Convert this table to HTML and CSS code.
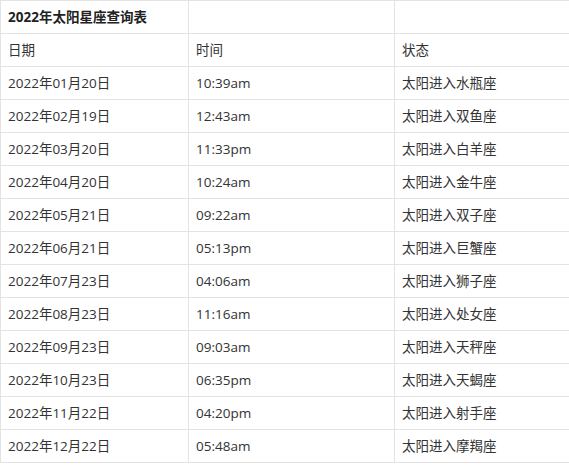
FILE: index.html
```html
<!DOCTYPE html>
<html lang="zh-CN">
<head>
<meta charset="utf-8">
<title>2022年太阳星座查询表</title>
<link rel="stylesheet" href="styles.css">
</head>
<body>
<table class="zodiac">
  <colgroup>
    <col class="c1"><col class="c2"><col class="c3">
  </colgroup>
  <tr class="title"><td>2022年太阳星座查询表</td><td></td><td></td></tr>
  <tr><td>日期</td><td>时间</td><td>状态</td></tr>
  <tr><td>2022年01月20日</td><td>10:39am</td><td>太阳进入水瓶座</td></tr>
  <tr><td>2022年02月19日</td><td>12:43am</td><td>太阳进入双鱼座</td></tr>
  <tr><td>2022年03月20日</td><td>11:33pm</td><td>太阳进入白羊座</td></tr>
  <tr><td>2022年04月20日</td><td>10:24am</td><td>太阳进入金牛座</td></tr>
  <tr><td>2022年05月21日</td><td>09:22am</td><td>太阳进入双子座</td></tr>
  <tr><td>2022年06月21日</td><td>05:13pm</td><td>太阳进入巨蟹座</td></tr>
  <tr><td>2022年07月23日</td><td>04:06am</td><td>太阳进入狮子座</td></tr>
  <tr><td>2022年08月23日</td><td>11:16am</td><td>太阳进入处女座</td></tr>
  <tr><td>2022年09月23日</td><td>09:03am</td><td>太阳进入天秤座</td></tr>
  <tr><td>2022年10月23日</td><td>06:35pm</td><td>太阳进入天蝎座</td></tr>
  <tr><td>2022年11月22日</td><td>04:20pm</td><td>太阳进入射手座</td></tr>
  <tr><td>2022年12月22日</td><td>05:48am</td><td>太阳进入摩羯座</td></tr>
</table>
</body>
</html>
```

FILE: styles.css
```css
html, body {
  margin: 0;
  padding: 0;
  background: #fff;
}
.zodiac {
  border-collapse: collapse;
  table-layout: fixed;
  width: 569px;
  font-family: "Open Sans", "Noto Sans CJK SC", sans-serif;
  font-size: 13.5px;
  color: #333;
}
.c1 { width: 188px; }
.c2 { width: 206px; }
.c3 { width: 175px; }
.zodiac td {
  border: 1px solid #e3e3e3;
  height: 33px;
  padding: 0 7px;
  box-sizing: border-box;
  vertical-align: middle;
  white-space: nowrap;
  line-height: 18px;
}
.zodiac td:last-child { border-right: none; }
.title td {
  font-weight: bold;
  color: #222;
}
```
